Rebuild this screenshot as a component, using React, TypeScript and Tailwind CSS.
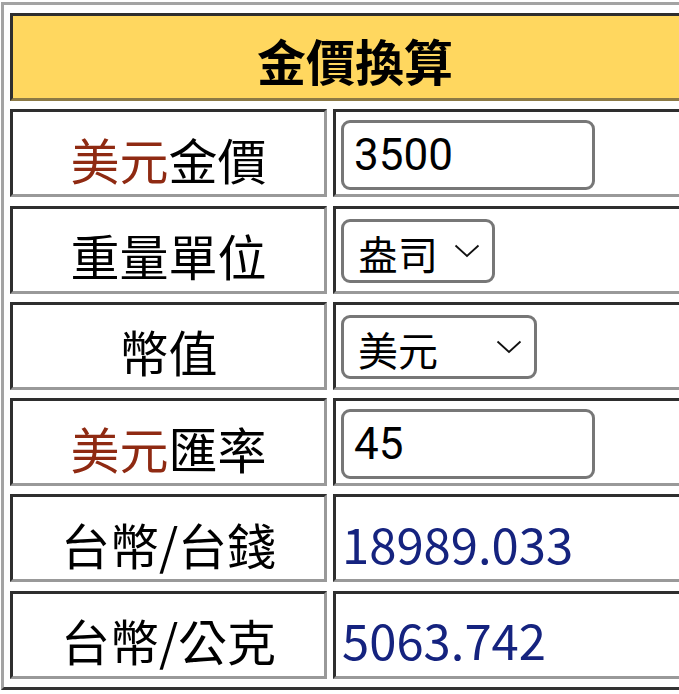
const cjk = "font-['Noto_Sans_CJK_TC','Noto_Sans_CJK_SC',sans-serif]";

function Chevron() {
  return (
    <svg width="26" height="14" viewBox="0 0 26 14" fill="none" className="shrink-0">
      <path d="M1.5 1.5 L13 12 L24.5 1.5" stroke="#111" strokeWidth="1.8" />
    </svg>
  );
}

function Cell({
  children,
  className = "bg-white border-b-[#999] border-r-[#999]",
}: {
  children: React.ReactNode;
  className?: string;
}) {
  return (
    <div className={`border-[3px] border-t-[#2e2e2e] border-l-[#2e2e2e] flex items-center ${className}`}>
      {children}
    </div>
  );
}

function Label({ red, black }: { red?: string; black: string }) {
  return (
    <Cell className="bg-white border-b-[#999] border-r-[#999] justify-center">
      <span className={`${cjk} text-[49px] leading-none pt-[10px]`}>
        {red && <span className="text-[#8f2a12]">{red}</span>}
        <span className="text-black">{black}</span>
      </span>
    </Cell>
  );
}

function TextBox({ value }: { value: string }) {
  return (
    <div className="ml-[5px] mt-[4px] w-[254px] h-[70px] rounded-[9px] border-[3px] border-[#777] flex items-center pl-[10px]">
      <span className="font-['Roboto',sans-serif] text-[44px] leading-none text-black">{value}</span>
    </div>
  );
}

function SelectBox({ value, width }: { value: string; width: string }) {
  return (
    <div
      className={`ml-[5px] mt-[3px] ${width} h-[64px] rounded-[9px] border-[3px] border-[#777] flex items-center justify-between pl-[14px] pr-[12px]`}
    >
      <span className={`${cjk} text-[40px] leading-none text-black pt-[4px]`}>{value}</span>
      <Chevron />
    </div>
  );
}

function Value({ text }: { text: string }) {
  return (
    <Cell>
      <span className={`${cjk} text-[49px] leading-none text-[#15237f] pl-[6px] pt-[8px]`}>{text}</span>
    </Cell>
  );
}

export default function App() {
  return (
    <div className="w-[679px] h-[694px] overflow-hidden bg-white">
      <div className="ml-[1px] mt-[2px] w-[708px] border-[3px] border-t-[#a3a3a3] border-l-[#a3a3a3] border-b-[#333] border-r-[#333] px-[6px] py-[8px]">
        <div className="grid grid-cols-[317px_367px] auto-rows-[88px] gap-x-[6px] gap-y-[8.3px]">
          <Cell className="col-span-2 justify-center bg-[#ffd75f] border-b-[#8c7a45] border-r-[#8c7a45]">
            <span className={`${cjk} text-[49px] leading-none font-bold text-black pt-[4px]`}>金價換算</span>
          </Cell>

          <Label red="美元" black="金價" />
          <Cell>
            <TextBox value="3500" />
          </Cell>

          <Label black="重量單位" />
          <Cell>
            <SelectBox value="盎司" width="w-[154px]" />
          </Cell>

          <Label black="幣值" />
          <Cell>
            <SelectBox value="美元" width="w-[196px]" />
          </Cell>

          <Label red="美元" black="匯率" />
          <Cell>
            <TextBox value="45" />
          </Cell>

          <Label black="台幣/台錢" />
          <Value text="18989.033" />

          <Label black="台幣/公克" />
          <Value text="5063.742" />
        </div>
      </div>
    </div>
  );
}
